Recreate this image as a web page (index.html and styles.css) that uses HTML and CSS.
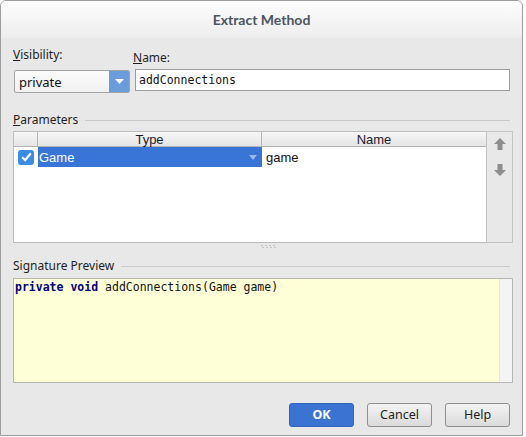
FILE: index.html
```html
<!DOCTYPE html>
<html>
<head>
<meta charset="utf-8">
<link rel="stylesheet" href="styles.css">
</head>
<body>
<div class="window">
  <div class="titlebar">Extract Method</div>
  <div class="content">
    <div class="top-row">
      <div class="vis-col">
        <div class="label"><u>V</u>isibility:</div>
        <div class="combo">
          <span class="combo-text">private</span>
          <span class="combo-btn"><svg width="9" height="5" viewBox="0 0 9 5"><path d="M0 0H9L4.5 5Z" fill="#fff"/></svg></span>
        </div>
      </div>
      <div class="name-col">
        <div class="label"><u>N</u>ame:</div>
        <div class="textfield">addConnections</div>
      </div>
    </div>

    <div class="section-title section-params"><span><u>P</u>arameters</span><div class="rule"></div></div>

    <div class="params">
      <div class="table">
        <div class="thead">
          <div class="th col-check"></div>
          <div class="th col-type">Type</div>
          <div class="th col-name">Name</div>
        </div>
        <div class="trow">
          <div class="td col-check">
            <span class="checkbox"><svg width="11" height="10" viewBox="0 0 11 10"><path d="M1.2 5.2 L4.2 8.2 L9.8 1.2" fill="none" stroke="#fff" stroke-width="2.2"/></svg></span>
          </div>
          <div class="td col-type selected">
            <span>Game</span>
            <svg class="cell-arrow" width="8" height="5" viewBox="0 0 8 5"><path d="M0 0H8L4 5Z" fill="#9fb9e6"/></svg>
          </div>
          <div class="td col-name">game</div>
        </div>
      </div>
      <div class="side-panel">
        <svg class="side-icon" width="12" height="12" viewBox="0 0 12 12"><path d="M6 0 L12 6 H8.5 V12 H3.5 V6 H0 Z" fill="#8d8d8d"/></svg>
        <svg class="side-icon" width="12" height="12" viewBox="0 0 12 12"><path d="M6 12 L12 6 H8.5 V0 H3.5 V6 H0 Z" fill="#8d8d8d"/></svg>
      </div>
    </div>

    <div class="grip">
      <svg width="16" height="3" viewBox="0 0 16 3">
        <rect x="0" y="0" width="2" height="1" fill="#c4c4c4"/><rect x="4" y="0" width="2" height="1" fill="#c4c4c4"/><rect x="8" y="0" width="2" height="1" fill="#c4c4c4"/><rect x="12" y="0" width="2" height="1" fill="#c4c4c4"/>
        <rect x="1" y="2" width="2" height="1" fill="#c4c4c4"/><rect x="5" y="2" width="2" height="1" fill="#c4c4c4"/><rect x="9" y="2" width="2" height="1" fill="#c4c4c4"/><rect x="13" y="2" width="2" height="1" fill="#c4c4c4"/>
      </svg>
    </div>

    <div class="section-title section-sig"><span>Signature Preview</span><div class="rule"></div></div>

    <div class="preview">
      <div class="code"><b>private</b> <b>void</b> addConnections(Game game)</div>
      <div class="vscroll"></div>
    </div>

    <div class="buttons">
      <div class="btn btn-ok">OK</div>
      <div class="btn">Cancel</div>
      <div class="btn">Help</div>
    </div>
  </div>
</div>
</body>
</html>
```
FILE: styles.css
```css
* { box-sizing: border-box; }

html, body {
  margin: 0;
  padding: 0;
  background: #ffffff;
}

body {
  font-family: "Noto Sans", "DejaVu Sans", sans-serif;
  font-size: 12px;
  color: #1e1e1e;
}

.window {
  width: 523px;
  height: 436px;
  border: 1px solid #9c9c9c;
  border-radius: 6px 6px 0 0;
  background: #e8e8e8;
  display: flex;
  flex-direction: column;
  overflow: hidden;
}

.titlebar {
  height: 37px;
  line-height: 37px;
  text-align: center;
  font-family: Lato, "Noto Sans", sans-serif;
  font-weight: 700;
  font-size: 14px;
  color: #4c5561;
  background: linear-gradient(#fdfdfd, #ededed);
  flex-shrink: 0;
}

.content {
  padding: 0 12px;
  display: flex;
  flex-direction: column;
}

.top-row {
  display: flex;
  padding-top: 9px;
  gap: 3px;
}

.label {
  line-height: 16px;
  height: 16px;
  white-space: nowrap;
}

.vis-col {
  width: 117px;
  flex-shrink: 0;
}

.combo {
  margin-top: 7px;
  margin-left: 1px;
  width: 116px;
  height: 23px;
  border: 1px solid #a3a3a3;
  border-radius: 2px;
  background: linear-gradient(#fbfbfb, #f1f1f1);
  display: flex;
  align-items: stretch;
  overflow: hidden;
}

.combo-text {
  flex: 1;
  padding-left: 4px;
  line-height: 22px;
  font-size: 13px;
  color: #111;
}

.combo-btn {
  width: 20px;
  background: #6b9bd9;
  display: flex;
  align-items: center;
  justify-content: center;
}

.name-col {
  flex: 1;
  padding-top: 3px;
}

.textfield {
  margin-top: 3px;
  margin-left: 2px;
  height: 22px;
  border: 1px solid #9c9c9c;
  background: #ffffff;
  padding-left: 3px;
  line-height: 20px;
  font-family: "DejaVu Sans Mono", monospace;
  font-size: 11.5px;
  color: #111;
}

.section-title {
  display: flex;
  align-items: center;
  height: 16px;
  line-height: 16px;
  gap: 7px;
  white-space: nowrap;
}

.section-params {
  margin-top: 19px;
}

.section-sig {
  margin-top: 7px;
}

.rule {
  flex: 1;
  height: 0;
  border-top: 1px solid #c9c9c9;
  margin-top: 1px;
}

.params {
  margin-top: 3px;
  display: flex;
  height: 112px;
}

.table {
  width: 474px;
  flex-shrink: 0;
  border: 1px solid #bcbcbc;
  background: #ffffff;
  font-family: "Liberation Sans", Arial, sans-serif;
  font-size: 13px;
}

.thead {
  display: flex;
  height: 15px;
  border-bottom: 1px solid #b4b4b4;
  background: linear-gradient(#f7f7f7, #e4e4e4);
}

.th {
  line-height: 15px;
  text-align: center;
  color: #1a1a2e;
}

.col-check {
  width: 24px;
  border-right: 1px solid #b4b4b4;
  flex-shrink: 0;
}

.col-type {
  width: 224px;
  flex-shrink: 0;
  border-right: 1px solid #b4b4b4;
}

.col-name {
  flex: 1;
}

.trow {
  display: flex;
  height: 20px;
}

.trow .col-check,
.trow .col-type {
  border-right: none;
}

.td {
  line-height: 21px;
}

.td.col-check {
  display: flex;
  align-items: center;
  padding-left: 4px;
}

.td.col-type {
  width: 224px;
}

.checkbox {
  width: 16px;
  height: 15px;
  border-radius: 3px;
  background: #3b8be3;
  display: flex;
  align-items: center;
  justify-content: center;
}

.selected {
  background: #3875d7;
  color: #ffffff;
  padding-left: 1px;
  display: flex;
  align-items: center;
  justify-content: space-between;
  padding-right: 5px;
}

.td.col-name {
  padding-left: 4px;
  color: #111;
}

.side-panel {
  width: 27px;
  margin-left: -1px;
  flex-shrink: 0;
  border: 1px solid #c3c3c3;
  background: #e8e8e8;
  display: flex;
  flex-direction: column;
  align-items: center;
  padding-top: 6px;
  gap: 14px;
}

.grip {
  height: 8px;
  display: flex;
  justify-content: center;
  padding-top: 2px;
}

.grip svg {
  margin-left: 14px;
}

.preview {
  margin-top: 4px;
  width: 500px;
  height: 105px;
  border: 1px solid #b6b6b6;
  background: #ffffd7;
  display: flex;
}

.code {
  flex: 1;
  padding-left: 1px;
  padding-top: 1px;
  line-height: 15px;
  font-family: "DejaVu Sans Mono", monospace;
  font-size: 11.5px;
  color: #111;
  white-space: pre;
}

.code b {
  color: #000080;
  font-weight: 700;
}

.vscroll {
  width: 13px;
  background: #f4f4f4;
  border-left: 1px solid #e4e4e4;
}

.buttons {
  margin-top: 20px;
  display: flex;
  justify-content: flex-end;
  gap: 13px;
}

.btn {
  width: 65px;
  height: 24px;
  border: 1px solid #8f8f8f;
  border-radius: 3px;
  background: linear-gradient(#f4f4f4, #dadada);
  text-align: center;
  line-height: 22px;
  font-size: 12.5px;
  color: #1e1e1e;
}

.btn-ok {
  background: #3b73d3;
  border-color: #3064bd;
  color: #ffffff;
  font-weight: 700;
}
```
